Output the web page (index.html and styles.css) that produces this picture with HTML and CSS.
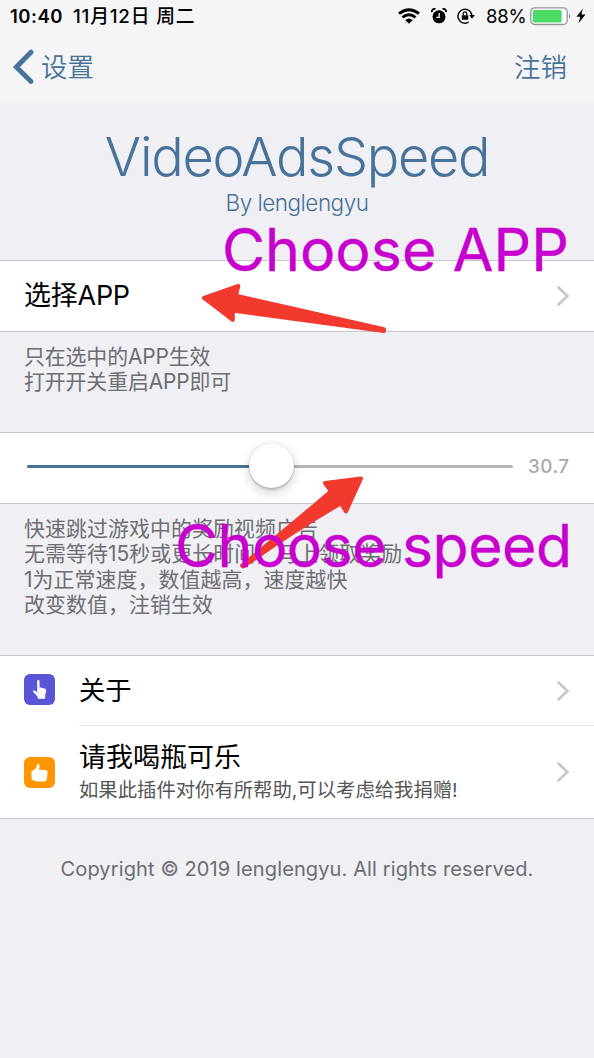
FILE: index.html
```html
<!DOCTYPE html>
<html lang="zh-CN">
<head>
<meta charset="utf-8">
<title>VideoAdsSpeed</title>
<link rel="stylesheet" href="styles.css">
</head>
<body>
<div class="screen">
  <header class="topbar">
    <div class="status">
      <span class="clock">10:40</span><span class="date">11月12日 周二</span>
      <svg class="wifi" width="22" height="16" viewBox="0 0 22 16"><g fill="none" stroke="#000" stroke-width="2.9"><path d="M1 5.6Q11-2.3 21 5.6"/><path d="M4.5 9.3Q11 4.2 17.5 9.3"/></g><path d="M7.2 12Q11 9 14.8 12L11 15.7Z"/></svg>
      <svg class="alarm" width="16" height="16" viewBox="0 0 16 16"><circle cx="8" cy="8.8" r="6.5"/><path d="M.8 4.2A3 3 0 0 1 4.5.9M11.5.9A3 3 0 0 1 15.2 4.2" fill="none" stroke="#000" stroke-width="1.8"/><path d="M8.2 5v4.3H5.4" fill="none" stroke="#f5f5f7" stroke-width="1.3"/></svg>
      <svg class="lock" width="18" height="16" viewBox="0 0 18 16"><path d="M11.6 14.2A7 7 0 1 1 15 8" fill="none" stroke="#000" stroke-width="1.4"/><path d="M12.2 7h5.6L15 10.8ZM4.8 7.2h6.4v4.6H4.8Z"/><path d="M6.2 7.5V5.7a1.8 1.8 0 0 1 3.6 0v1.8" fill="none" stroke="#000" stroke-width="1.2"/></svg>
      <span class="percent">88%</span>
      <svg class="battery" width="42" height="19" viewBox="0 0 42 19"><rect x=".8" y=".9" width="36.4" height="16.6" rx="4" fill="#fff" stroke="#949498" stroke-width="1.3"/><rect x="2.8" y="3" width="28.8" height="12.4" rx="1.5" fill="#4cd964"/><path d="M39 6.3q2.4 2.9 0 5.8Z" fill="#949498"/></svg>
      <svg class="bolt" width="10" height="16" viewBox="0 0 10 16"><path d="M6.8.8.5 8.8h3.8L2.5 15.2 9.5 6.6H5.4Z"/></svg>
    </div>
    <nav class="nav">
      <svg class="back" width="22" height="36" viewBox="0 0 22 36"><path d="M19 3.2 4.4 18 19 32.4" fill="none" stroke="#477299" stroke-width="4.9" stroke-linecap="round" stroke-linejoin="miter"/></svg>
      <span class="back-label">设置</span>
      <span class="respring">注销</span>
    </nav>
  </header>

  <section class="hero">
    <h1 class="title">VideoAdsSpeed</h1>
    <p class="author">By lenglengyu</p>
  </section>

  <div class="row choose">
    <span class="label">选择APP</span>
    <svg class="chevron" width="14" height="22" viewBox="0 0 14 22"><path d="m1.7 1.7 9.7 9.3-9.7 9.3"/></svg>
  </div>
  <div class="note note-app">只在选中的APP生效<br>打开开关重启APP即可</div>

  <div class="row slider">
    <div class="track"><div class="fill"></div><div class="thumb"></div></div>
    <span class="value">30.7</span>
  </div>
  <div class="note note-speed">快速跳过游戏中的奖励视频广告<br>无需等待15秒或更长时间，马上领取奖励<br>1为正常速度，数值越高，速度越快<br>改变数值，注销生效</div>

  <div class="list">
    <div class="item about">
      <svg class="icon" width="31" height="31" viewBox="0 0 31 31"><rect width="31" height="31" rx="6" fill="#5856d6"/><path d="M13.2 7.3q0-1.2 1.1-1.2t1.2 1.2v6l5.1 1.1q1.8.5 1.6 2.2l-1 4.5v3.7h-7.5v-2.1l-4.2-4.4q-1.2-1.3.2-1.9.9-.3 3.5 2Z" fill="#fff"/></svg>
      <div class="texts"><span class="label">关于</span></div>
      <svg class="chevron" width="14" height="22" viewBox="0 0 14 22"><path d="m1.7 1.7 9.7 9.3-9.7 9.3"/></svg>
    </div>
    <div class="item donate">
      <svg class="icon" width="31" height="31" viewBox="0 0 31 31"><rect width="31" height="31" rx="6" fill="#ff9500"/><path d="M7.3 14.5 9 13.4q3.5-1.4 3.8-4.8.3-2.1 1.7-1.9 1.7.5.5 6.1l6.6.1q2.2.3 2 2.2l-.7 7q-.3 2.2-2.5 2.3l-7.3.2q-1.8-.1-3.2-1.3L7.7 23Z" fill="#fff"/></svg>
      <div class="texts"><span class="label">请我喝瓶可乐</span><span class="sub">如果此插件对你有所帮助,可以考虑给我捐赠!</span></div>
      <svg class="chevron" width="14" height="22" viewBox="0 0 14 22"><path d="m1.7 1.7 9.7 9.3-9.7 9.3"/></svg>
    </div>
  </div>
  <footer class="footer">Copyright © 2019 lenglengyu. All rights reserved.</footer>

  <svg class="arrows" width="594" height="1058" viewBox="0 0 594 1058"><g fill="#f1392d" stroke="#f1392d" stroke-width="4" stroke-linejoin="round"><path d="M204 297.8 238.3 286 236 295.8 384 329.3V331L232.8 310.5V320Z"/><path d="M361 478.5 325 483 331 491.2Q300 518 242 565.5L243.5 566.5Q290 533 341 503.2L346 511.5Z"/></g></svg>
  <div class="callout callout-app">Choose APP</div>
  <div class="callout callout-speed">Choose speed</div>
</div>
</body>
</html>
```
FILE: styles.css
```css
* { box-sizing: border-box; }
body { margin: 0; background: #efeff4; font-family: Inter, "Noto Sans CJK SC", sans-serif; }
h1, p { margin: 0; font-weight: 300; }
svg { display: block; flex: none; }
.screen { position: relative; width: 594px; height: 1058px; overflow: hidden; color: #000; white-space: nowrap; }
.topbar { height: 102px; background: #f5f5f7; }
.status { display: flex; align-items: center; height: 32px; padding-left: 10px; font-size: 18px; line-height: 24px; font-weight: 500; }
.clock { width: 63px; font-size: 18.5px; letter-spacing: .5px; font-weight: 600; }
.date { width: 325px; margin-top: 2px; font-size: 18.8px; letter-spacing: .8px; }
.alarm { margin-left: 11px; }
.lock { margin-left: 10px; }
.percent { margin-left: 11px; width: 44px; font-weight: 400; font-size: 18.5px; letter-spacing: -.2px; }
.bolt { margin-left: 4px; }
.nav { display: flex; align-items: center; height: 70px; padding: 0 27px 0 12px; font-size: 26.5px; line-height: 36px; font-weight: 350; color: #477299; }
.back-label { margin: -1px 0 0 7px; }
.respring { margin: -1px 0 0 auto; }
.hero { height: 158px; padding-top: 22px; text-align: center; color: #477299; }
.title { font-size: 54px; line-height: 66px; font-weight: 300; letter-spacing: -1.3px; }
.author { font-size: 22.5px; line-height: 26px; font-weight: 300; letter-spacing: -.5px; }
.row { display: flex; align-items: center; height: 72px; background: #fff; border-top: 1px solid #c8c7cc; border-bottom: 1px solid #c8c7cc; padding: 0 24px; }
.label { font-size: 27px; line-height: 36px; }
.choose .label { letter-spacing: -.25px; }
.chevron { margin-left: auto; fill: none; stroke: #c7c7cc; stroke-width: 2.7; }
.note { padding: 12px 24px 0; font-size: 20.9px; line-height: 25.3px; color: #6d6d72; }
.note-app { height: 100px; letter-spacing: -.1px; }
.note-speed { height: 151px; letter-spacing: .1px; }
.track { position: relative; width: 486px; height: 3px; margin-left: 3px; margin-top: -3px; border-radius: 2px; background: #b6b6b6; }
.fill { width: 244px; height: 3px; border-radius: 2px; background: #477299; }
.thumb { position: absolute; left: 222px; top: -22px; width: 45px; height: 45px; border-radius: 50%; background: #fff; box-shadow: 0 0 1px rgba(0,0,0,.3), 0 2px 2px rgba(0,0,0,.16), 0 5px 12px rgba(0,0,0,.17); }
.value { margin: -3px 0 0 15px; font-size: 18.8px; font-weight: 500; letter-spacing: .5px; color: #a9a9a9; }
.list { background: #fff; border-top: 1px solid #c8c7cc; border-bottom: 1px solid #c8c7cc; }
.item { display: flex; align-items: center; padding: 0 24px; }
.about { height: 70px; background: linear-gradient(#e4e4e6, #e4e4e6) 79px bottom / 515px 1px no-repeat; }
.about .icon { margin-top: -3px; }
.about .label { font-size: 26.3px; }
.donate { height: 92px; }
.texts { display: flex; flex-direction: column; margin-left: 24px; }
.sub { font-size: 19.35px; line-height: 28px; color: #555; }
.footer { padding-top: 36px; text-align: center; font-size: 20px; line-height: 28px; letter-spacing: .12px; color: #6d6d72; }
.arrows { position: absolute; left: 0; top: 0; }
.callout { position: absolute; font-size: 59px; line-height: 72px; color: #c800cf; -webkit-text-stroke: .4px #c800cf; }
.callout-app { left: 222px; top: 214px; }
.callout-speed { left: 175px; top: 510px; letter-spacing: -.55px; }
```
